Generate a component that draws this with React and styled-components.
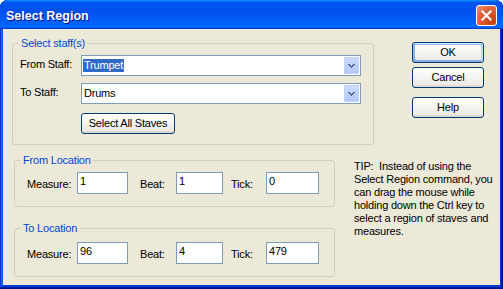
import React from 'react';
import styled, { createGlobalStyle } from 'styled-components';

const Global = createGlobalStyle`
  html, body { margin: 0; padding: 0; background: #ffffff; }
  body { font-family: "Liberation Sans", Arial, sans-serif; font-size: 11px; color: #000; }
  * { box-sizing: border-box; }
`;

const FONT = `"Liberation Sans", Arial, sans-serif`;
const LS = '-0.2px';

const Window = styled.div`
  width: 503px;
  height: 289px;
  display: flex;
  flex-direction: column;
  background: #0855dd;
  border-radius: 8px 8px 0 0;
  overflow: hidden;
  box-shadow: inset -1px -1px #00138c, inset 1px 1px #0831d9,
    inset -2px -2px #001ea0, inset 2px 2px #166aee,
    inset -3px -3px #003bda, inset 3px 3px #0855dd, inset 0 -4px #003bda;
`;

const TitleBar = styled.div`
  flex: none;
  height: 29px;
  display: flex;
  align-items: flex-start;
  justify-content: space-between;
  padding: 0 6px 0 6px;
  border-radius: 8px 8px 0 0;
  background: linear-gradient(180deg, #0997ff, #0053ee 8%, #0050ee 40%, #06f 88%, #06f 93%, #005bff 95%, #003dd7 96%, #003dd7);
`;

const Title = styled.div`
  margin-top: 9px;
  font: bold 12.5px/15px ${FONT};
  color: #fff;
  text-shadow: 1px 1px #0f1089;
`;

const CloseButton = styled.div`
  width: 21px;
  height: 21px;
  margin-top: 5px;
  border: 1px solid #fff;
  border-radius: 3px;
  background: radial-gradient(circle at 80% 85%, #c8400f 0%, #d9532a 40%, #e26a42 70%, #f29a7c 100%);
  display: flex;
  align-items: center;
  justify-content: center;
`;

const Client = styled.div`
  flex: 1;
  margin: 0 3px 4px 3px;
  background: #ece9d8;
  padding: 8px 0 0 9px;
  display: flex;
  flex-direction: column;
`;

const Row = styled.div`
  display: flex;
  align-items: flex-start;
  margin-top: ${p => p.$mt || 0}px;
`;

const Column = styled.div`
  display: flex;
  flex-direction: column;
  margin-left: ${p => p.$ml || 0}px;
  margin-top: ${p => p.$mt || 0}px;
`;

const Group = styled.fieldset`
  margin: ${p => p.$mt || 0}px 0 0 0;
  padding: 0;
  width: ${p => p.$w}px;
  min-width: 0;
  border: 1px solid #d0d0bf;
  border-radius: 3px;
`;

const Legend = styled.legend`
  margin-left: 6px;
  padding: 0 2px;
  font: 11px/13px ${FONT};
  letter-spacing: ${LS};
  color: #0046d5;
`;

const GroupBody = styled.div`
  display: flex;
  flex-direction: column;
  padding: ${p => p.$pad};
`;

const Label = styled.label`
  flex: none;
  width: ${p => p.$w}px;
  margin-left: ${p => p.$ml || 0}px;
  padding-top: ${p => p.$pt}px;
  font: 11px/13px ${FONT};
  letter-spacing: ${LS};
  color: #000;
  white-space: nowrap;
`;

const Combo = styled.div`
  width: 280px;
  height: 21px;
  display: flex;
  align-items: stretch;
  border: 1px solid #7f9db9;
  background: #fff;
  padding: 1px;
`;

const ComboText = styled.div`
  flex: 1;
  display: flex;
  align-items: flex-start;
  padding-top: 2px;
`;

const ComboValue = styled.span`
  font: 11px/13px ${FONT};
  letter-spacing: ${LS};
  padding: 0 1px;
  background: ${p => (p.$selected ? '#316ac5' : 'transparent')};
  color: ${p => (p.$selected ? '#fff' : '#000')};
`;

const ComboButton = styled.div`
  width: 15px;
  border: 1px solid #bdd0fa;
  border-radius: 1px;
  background: linear-gradient(180deg, #cddcfd 0%, #bfd2fb 50%, #b3c8f8 100%);
  display: flex;
  align-items: center;
  justify-content: center;
`;

const TextBox = styled.input`
  flex: none;
  width: ${p => p.$w}px;
  height: 22px;
  margin: 0;
  border: 1px solid #7f9db9;
  background: #fff;
  padding: 1px 2px 6px;
  font: 11px/13px ${FONT};
  letter-spacing: ${LS};
  color: #000;
  outline: none;
`;

const Button = styled.button`
  flex: none;
  width: ${p => p.$w}px;
  height: 21px;
  margin: ${p => p.$mt || 0}px 0 0 ${p => p.$ml || 0}px;
  padding: 0;
  border: 1px solid #003c74;
  border-radius: 3px;
  background: linear-gradient(180deg, #fff, #ecebe5 86%, #d8d0c4);
  font: 11px/13px ${FONT};
  letter-spacing: ${LS};
  color: #000;
  box-shadow: ${p =>
    p.$default
      ? 'inset -1px 1px #cee7ff, inset 1px 2px #98b8ea, inset -2px 2px #bcd4f6, inset 1px -1px #89ade4, inset 2px -2px #89ade4'
      : 'none'};
`;

const Tip = styled.div`
  margin: 6px 0 0 19px;
  width: 145px;
  font: 11px/13px ${FONT};
  letter-spacing: ${LS};
  color: #000;
  white-space: nowrap;
`;

const Arrow = () => (
  <svg width="7" height="4" viewBox="0 0 7 4" shapeRendering="crispEdges">
    <path
      fill="#4d6185"
      d="M0 0h2v1H0z M5 0h2v1H5z M1 1h2v1H1z M4 1h2v1H4z M2 2h3v1H2z M3 3h1v1H3z"
    />
  </svg>
);

const CloseX = () => (
  <svg width="11" height="11" viewBox="0 0 11 11">
    <path d="M1.5 1.5 L9.5 9.5 M9.5 1.5 L1.5 9.5" stroke="#fff" strokeWidth="2.2" strokeLinecap="square" />
  </svg>
);

const StaffRow = ({ label, value, selected, mt }) => (
  <Row $mt={mt}>
    <Label $w={61} $pt={3}>{label}</Label>
    <Combo>
      <ComboText>
        <ComboValue $selected={selected}>{value}</ComboValue>
      </ComboText>
      <ComboButton>
        <Arrow />
      </ComboButton>
    </Combo>
  </Row>
);

const LocationGroup = ({ title, measure, beat, tick, pt, mt }) => (
  <Group $w={321} $mt={mt}>
    <Legend>{title}</Legend>
    <GroupBody $pad={`${pt}px 0 12px 12px`}>
      <Row>
        <Label $w={50} $pt={6}>Measure:</Label>
        <TextBox $w={51} value={measure} readOnly />
        <Label $w={36} $ml={12} $pt={6}>Beat:</Label>
        <TextBox $w={47} value={beat} readOnly />
        <Label $w={35} $ml={8} $pt={6}>Tick:</Label>
        <TextBox $w={53} value={tick} readOnly />
      </Row>
    </GroupBody>
  </Group>
);

export default function App() {
  return (
    <>
      <Global />
      <Window>
        <TitleBar>
          <Title>Select Region</Title>
          <CloseButton>
            <CloseX />
          </CloseButton>
        </TitleBar>
        <Client>
          <Row>
            <Group $w={362}>
              <Legend>Select staff(s)</Legend>
              <GroupBody $pad="5px 0 10px 7px">
                <StaffRow label="From Staff:" value="Trumpet" selected />
                <StaffRow label="To Staff:" value="Drums" mt={7} />
                <Row $mt={9}>
                  <Button $w={94} $ml={61}>Select All Staves</Button>
                </Row>
              </GroupBody>
            </Group>
            <Column $ml={38} $mt={5}>
              <Button $w={72} $default>OK</Button>
              <Button $w={72} $mt={4}>Cancel</Button>
              <Button $w={72} $mt={9}>Help</Button>
            </Column>
          </Row>
          <Row $mt={9}>
            <Column $ml={2}>
              <LocationGroup title="From Location" measure="1" beat="1" tick="0" pt={5} />
              <LocationGroup title="To Location" measure="96" beat="4" tick="479" pt={7} mt={15} />
            </Column>
            <Tip>
              TIP:&nbsp; Instead of using the<br />
              Select Region command, you<br />
              can drag the mouse while<br />
              holding down the Ctrl key to<br />
              select a region of staves and<br />
              measures.
            </Tip>
          </Row>
        </Client>
      </Window>
    </>
  );
}
